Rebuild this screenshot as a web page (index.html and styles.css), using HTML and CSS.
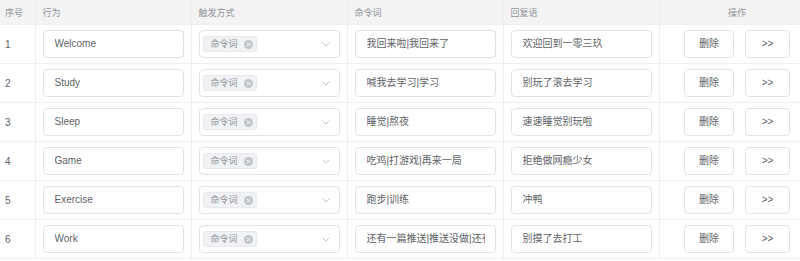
FILE: index.html
```html
<!DOCTYPE html>
<html lang="zh-CN">
<head>
<meta charset="utf-8">
<title>命令列表</title>
<link rel="stylesheet" href="styles.css">
</head>
<body>
<table class="grid">
  <colgroup>
    <col class="c-idx"><col class="c-w"><col class="c-w"><col class="c-w"><col class="c-w"><col class="c-w">
  </colgroup>
  <thead>
    <tr>
      <th class="idx">序号</th>
      <th>行为</th>
      <th>触发方式</th>
      <th>命令词</th>
      <th>回复语</th>
      <th class="center">操作</th>
    </tr>
  </thead>
  <tbody id="rows"></tbody>
</table>
<script src="app.js"></script>
</body>
</html>
```
FILE: app.js
```js
var data = [
  ["Welcome", "我回来啦|我回来了", "欢迎回到一零三玖"],
  ["Study", "喊我去学习|学习", "别玩了滚去学习"],
  ["Sleep", "睡觉|熬夜", "速速睡觉别玩啦"],
  ["Game", "吃鸡|打游戏|再来一局", "拒绝做网瘾少女"],
  ["Exercise", "跑步|训练", "冲鸭"],
  ["Work", "还有一篇推送|推送没做|还有工作", "别摸了去打工"]
];
var chev = '<svg class="chev" width="8" height="5" viewBox="0 0 8 5"><path d="M0.5 0.5 L4 4 L7.5 0.5" fill="none" stroke="#c0c4cc" stroke-width="1"/></svg>';
var close = '<span class="tag-x"><svg width="5" height="5" viewBox="0 0 5 5"><path d="M0.8 0.8 L4.2 4.2 M4.2 0.8 L0.8 4.2" stroke="#fff" stroke-width="1"/></svg></span>';
var html = "";
data.forEach(function (r, i) {
  html += '<tr>' +
    '<td class="idx">' + (i + 1) + '</td>' +
    '<td><div class="inp"><span class="val">' + r[0] + '</span></div></td>' +
    '<td><div class="sel"><span class="tag"><span class="tag-t">命令词</span>' + close + '</span>' + chev + '</div></td>' +
    '<td><div class="inp"><span class="val">' + r[1] + '</span></div></td>' +
    '<td><div class="inp"><span class="val">' + r[2] + '</span></div></td>' +
    '<td class="center"><div class="ops"><span class="btn del">删除</span><span class="btn more">&gt;&gt;</span></div></td>' +
    '</tr>';
});
document.getElementById("rows").innerHTML = html;
```
FILE: styles.css
```css
html, body {
  margin: 0;
  padding: 0;
  background: #fff;
  overflow: hidden;
}
body {
  font-family: "Liberation Sans", "Noto Sans CJK SC", sans-serif;
  color: #606266;
}
.grid {
  border-collapse: collapse;
  table-layout: fixed;
  width: 815px;
}
.c-idx { width: 35px; }
.c-w { width: 156px; }
.grid th, .grid td {
  border: 1px solid #ebeef5;
  padding: 5px 7px;
  text-align: left;
}
.grid tr > :first-child { border-left: none; }
.grid thead tr > * { border-top: none; }
.grid th {
  background: #f3f3f4;
  height: 24px;
  padding-top: 0;
  padding-bottom: 0;
  font-size: 9px;
  font-weight: normal;
  color: #909399;
  vertical-align: middle;
}
.grid td {
  height: 28px;
  font-size: 10px;
  vertical-align: middle;
}
.grid .idx { padding-left: 5px; padding-right: 2px; }
.grid .center { text-align: center; }
.inp {
  box-sizing: border-box;
  height: 28px;
  line-height: 26px;
  border: 1px solid #e1e3e8;
  border-radius: 4px;
  padding: 0 10px 0 11px;
  font-size: 10px;
  color: #606266;
}
.val {
  display: block;
  white-space: nowrap;
  overflow: hidden;
}
.sel {
  box-sizing: border-box;
  height: 28px;
  border: 1px solid #e1e3e8;
  border-radius: 4px;
  padding: 0 9px 0 3px;
  display: flex;
  align-items: center;
  justify-content: space-between;
}
.tag {
  box-sizing: border-box;
  height: 16px;
  display: inline-flex;
  align-items: center;
  gap: 6px;
  padding: 0 3px 0 7px;
  background: #f0f2f5;
  border: 1px solid #e9e9eb;
  border-radius: 3px;
  font-size: 9px;
  color: #909399;
}
.tag-t { line-height: 14px; }
.tag-x {
  width: 9px;
  height: 9px;
  border-radius: 50%;
  background: #c0c4cc;
  display: inline-flex;
  align-items: center;
  justify-content: center;
}
.tag-x svg { display: block; }
.chev { display: block; }
.ops {
  display: flex;
  justify-content: center;
  gap: 11px;
}
.btn {
  box-sizing: border-box;
  height: 28px;
  line-height: 26px;
  border: 1px solid #e1e3e8;
  border-radius: 4px;
  background: #fff;
  font-size: 10px;
  color: #606266;
  text-align: center;
}
.del { width: 50px; }
.more { width: 45px; }
```
